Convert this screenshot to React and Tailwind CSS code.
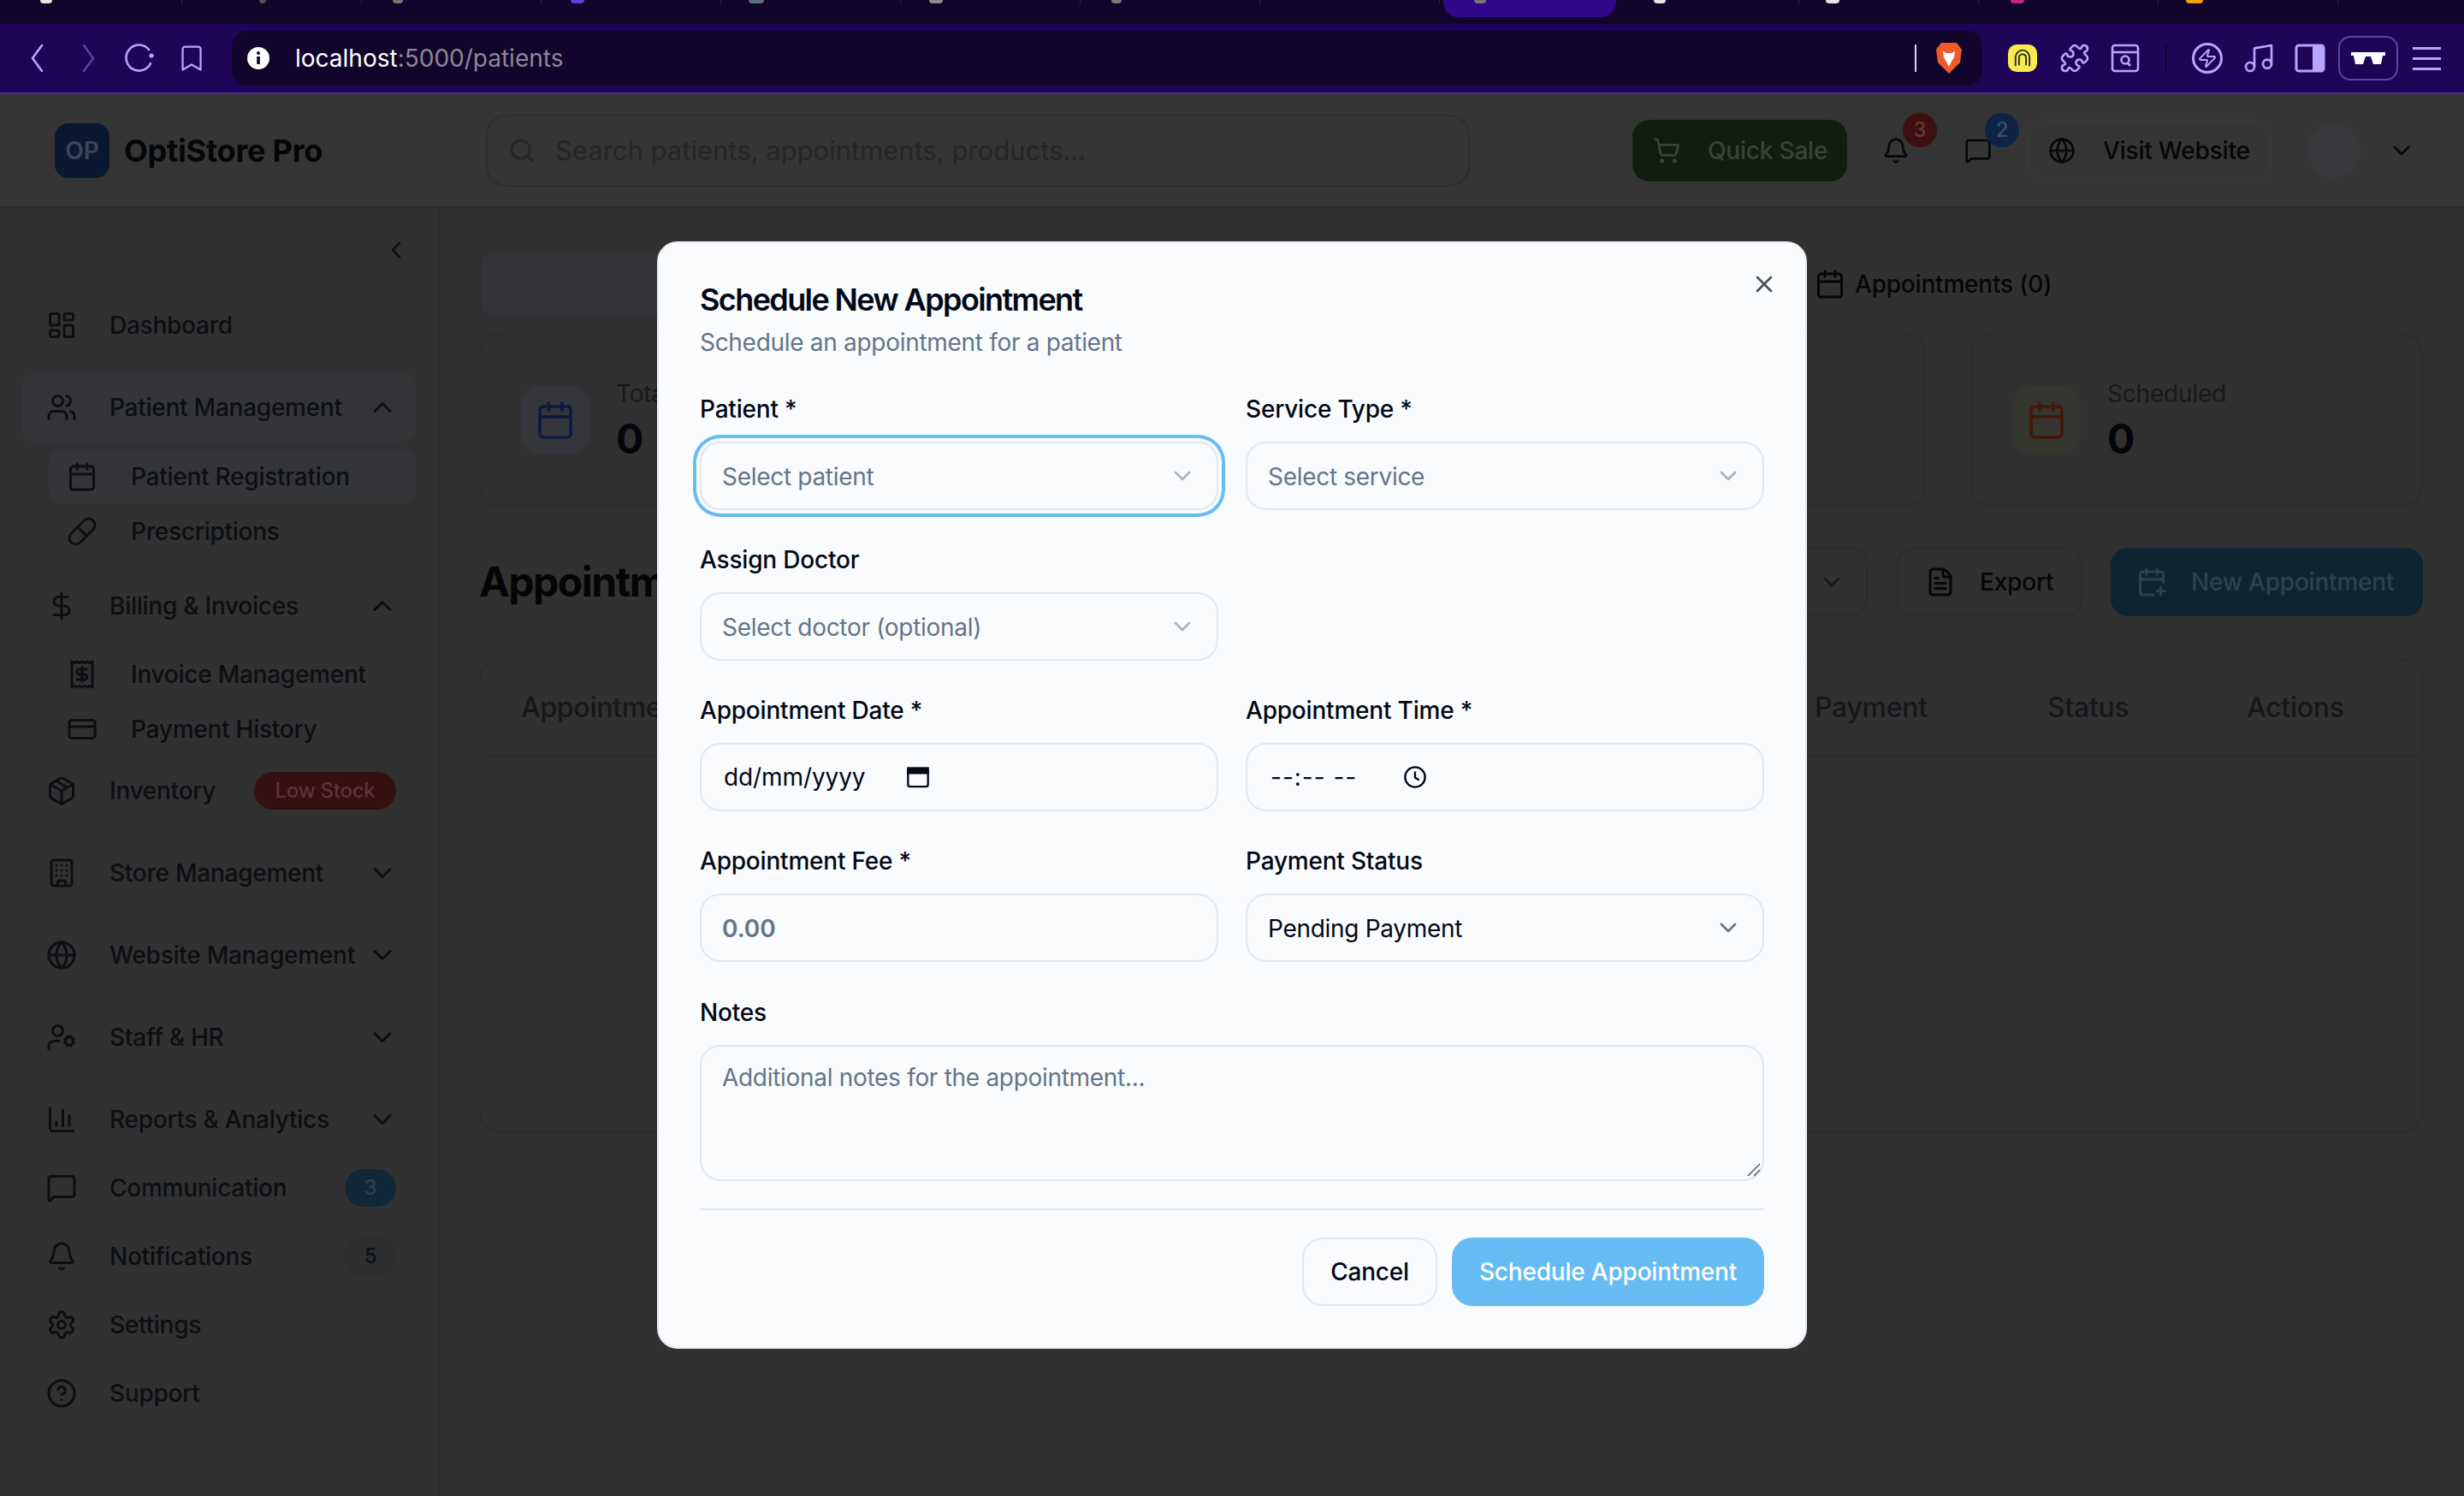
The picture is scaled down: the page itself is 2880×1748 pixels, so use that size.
import {
  Bell, BarChart3, Bookmark, Building, Calendar, CalendarPlus, ChevronDown, ChevronLeft, ChevronUp,
  CircleHelp, CreditCard, DollarSign, FileText, Globe, LayoutDashboard, MessageSquare, Music,
  Package, Pill, Puzzle, Receipt, Search, Settings, ShoppingCart, UserCog, Users, X, Zap,
} from 'lucide-react';

const tabStubs = [
  { w: 'w-[14px]', bg: 'bg-[#e5e5e5]', ml: 'ml-[44px]' },
  { w: 'w-[8px]', bg: 'bg-[#555555]', ml: 'ml-[90px]' },
  { w: 'w-[12px]', bg: 'bg-[#777777]', ml: 'ml-[36px]' },
  { w: 'w-[16px]', bg: 'bg-[#5a3fd0]', ml: 'ml-[34px]' },
  { w: 'w-[18px]', bg: 'bg-[#5c7080]', ml: 'ml-[32px]' },
  { w: 'w-[16px]', bg: 'bg-[#8a8a8a]', ml: 'ml-[33px]' },
  { w: 'w-[12px]', bg: 'bg-[#777777]', ml: 'ml-[36px]' },
  { w: 'w-0', bg: 'bg-transparent', ml: 'ml-[36px]' },
  { w: 'w-[14px]', bg: 'bg-[#777777]', ml: 'ml-[36px]' },
  { w: 'w-[14px]', bg: 'bg-[#e5e5e5]', ml: 'ml-[40px]' },
  { w: 'w-[16px]', bg: 'bg-[#e5e5e5]', ml: 'ml-[31px]' },
  { w: 'w-[16px]', bg: 'bg-[#c0268a]', ml: 'ml-[37px]' },
  { w: 'w-[20px]', bg: 'bg-[#f59e0b]', ml: 'ml-[32px]' },
  { w: 'w-0', bg: 'bg-transparent', ml: 'ml-[36px]' },
];

function TabStrip() {
  return (
    <div className="flex h-[28px] bg-[#11052b] pl-[3px]">
      {tabStubs.map((t, i) =>
        i === 8 ? (
          <div key={i} className="mx-[4px] flex h-[20px] w-[202px] shrink-0 rounded-b-[18px] bg-[#33078a]">
            <div className={`ml-[36px] h-[4px] rounded-b-full ${t.w} ${t.bg}`} />
          </div>
        ) : (
          <div key={i} className="h-[5px] w-[210px] shrink-0 border-r border-[#2f1a66]">
            <div className={`h-[4px] rounded-b-full ${t.w} ${t.bg} ${t.ml}`} />
          </div>
        )
      )}
    </div>
  );
}

function BrowserToolbar() {
  return (
    <div className="flex h-[82px] items-center border-b-2 border-[#4a2a8c] bg-[#1f0558] pl-[23px] text-[#b8a4ff]">
      <svg viewBox="0 0 36 36" className="size-9" fill="none" stroke="currentColor" strokeWidth="2.6" strokeLinecap="round" strokeLinejoin="round">
        <path d="M26 3 L15 18 L26 33" />
      </svg>
      <svg viewBox="0 0 36 36" className="ml-[27px] size-9 text-[#5c3fa0]" fill="none" stroke="currentColor" strokeWidth="2.6" strokeLinecap="round" strokeLinejoin="round">
        <path d="M12 3 L23 18 L12 33" />
      </svg>
      <svg viewBox="0 0 36 36" className="ml-[23px] size-9" fill="none" stroke="currentColor" strokeWidth="2.6" strokeLinecap="round">
        <path d="M29 8 A15 15 0 1 0 31 24" />
        <circle cx="32" cy="15" r="2.6" fill="currentColor" stroke="none" />
      </svg>
      <Bookmark className="ml-[25px] size-9" strokeWidth={1.5} />

      <div className="ml-[29px] flex h-[64px] w-[2046px] items-center rounded-[18px] bg-[#11052b] pl-[17px] pr-[23px]">
        <svg viewBox="0 0 28 28" className="size-7 shrink-0">
          <circle cx="14" cy="14" r="13" fill="#ffffff" />
          <circle cx="14" cy="8" r="2" fill="#11052b" />
          <rect x="12.2" y="12" width="3.6" height="9" fill="#11052b" />
        </svg>
        <span className="ml-[29px] text-[28px] text-white">
          localhost<span className="text-[#8d8797]">:5000/patients</span>
        </span>
        <div className="ml-auto h-[32px] w-[2px] bg-[#d8d4e0]" />
        <svg viewBox="0 0 32 38" className="ml-[22px] h-[38px] w-[32px]">
          <path d="M7 1 H25 L31 9 L29 24 L16 37 L3 24 L1 9 Z" fill="#f0592a" />
          <path d="M9 11 L13 13 H19 L23 11 L22 18 L19 23 L16 29 L13 23 L10 18 Z" fill="#ffffff" />
        </svg>
      </div>

      <div className="ml-[30px] flex h-[32px] w-[34px] items-center justify-center rounded-[10px] bg-[#f8ea4f]">
        <svg viewBox="0 0 24 24" className="size-7" fill="none" stroke="#27272a" strokeWidth="1.6">
          <path d="M5 20 V11 A7 7 0 0 1 19 11 V20" />
          <path d="M8.5 19 V11.5 A3.5 3.5 0 0 1 15.5 11.5 V19" />
        </svg>
      </div>
      <Puzzle className="ml-[26px] size-9" strokeWidth={1.7} />
      <svg viewBox="0 0 36 36" className="ml-[23px] size-9" fill="none" stroke="currentColor" strokeWidth="2.6">
        <rect x="3" y="3" width="30" height="30" rx="3" />
        <path d="M3 11 H33" />
        <circle cx="18" cy="20" r="4.5" />
        <path d="M21 24 L24 27" />
      </svg>
      <div className="ml-[29px] h-[32px] w-[2px] bg-[#0f0330]" />
      <div className="ml-[29px] flex size-9 items-center justify-center rounded-full border-[3px] border-[#b8a4ff]">
        <Zap className="size-6" strokeWidth={2} />
      </div>
      <Music className="ml-[22px] size-10" strokeWidth={1.6} />
      <svg viewBox="0 0 36 36" className="ml-[22px] size-9" fill="none">
        <rect x="2" y="3" width="32" height="30" rx="3" stroke="currentColor" strokeWidth="3" />
        <rect x="21" y="3" width="13" height="30" fill="currentColor" />
      </svg>
      <div className="ml-[15px] flex h-[52px] w-[70px] items-center justify-center rounded-[14px] border-2 border-[#5d43a8]">
        <svg viewBox="0 0 40 16" className="h-[16px] w-[40px]" fill="#ffffff">
          <path d="M0 1 H40 V5 H37 L35 15 H26 L23 6 H17 L14 15 H5 L3 5 H0 Z" />
        </svg>
      </div>
      <div className="ml-[17px] flex w-[33px] flex-col gap-[9px]">
        <div className="h-[3px] bg-[#b8a4ff]" />
        <div className="h-[3px] bg-[#b8a4ff]" />
        <div className="h-[3px] bg-[#b8a4ff]" />
      </div>
    </div>
  );
}

function AppHeader() {
  return (
    <header className="flex h-[133px] shrink-0 items-center border-b-2 border-[#2d2d2d] bg-[#353535] pl-[64px] pr-[57px]">
      <div className="flex w-[504px] items-center gap-[17px]">
        <div className="flex size-16 items-center justify-center rounded-2xl bg-[#0a1832] text-[28px] font-semibold text-[#3b4658]">OP</div>
        <span className="text-[36px] font-bold tracking-[-0.2px] text-[#040608]">OptiStore Pro</span>
      </div>
      <div className="flex h-[84px] w-[1150px] items-center rounded-[24px] border-2 border-[#2d2d2d] pl-[24px]">
        <Search className="size-8 text-[#252628]" />
        <span className="ml-[23px] pt-[2px] text-[31px] text-[#252628]">Search patients, appointments, products...</span>
      </div>
      <div className="ml-auto flex items-center tracking-[-0.2px]">
        <div className="flex h-[72px] w-[251px] items-center rounded-[20px] bg-[#0f1e0f] pl-[24px] text-[28px] font-medium text-[#38433a]">
          <ShoppingCart className="size-8" />
          <span className="ml-[32px]">Quick Sale</span>
        </div>
        <div className="relative ml-[21px] flex size-[72px] items-center justify-center text-[#040608]">
          <Bell className="size-8" />
          <span className="absolute left-[44px] top-[-8px] flex size-[40px] items-center justify-center rounded-full bg-[#3d0f0f] text-[24px] font-medium text-[#633838]">3</span>
        </div>
        <div className="relative ml-[24px] flex size-[72px] items-center justify-center text-[#040608]">
          <MessageSquare className="size-8" />
          <span className="absolute left-[44px] top-[-8px] flex size-[40px] items-center justify-center rounded-full bg-[#0f2347] text-[24px] font-medium text-[#384f76]">2</span>
        </div>
        <div className="ml-[21px] flex h-[72px] w-[286px] items-center rounded-[20px] border-2 border-[#383838] pl-[23px] text-[28px] font-medium text-[#040608]">
          <Globe className="size-8" />
          <span className="ml-[32px]">Visit Website</span>
        </div>
        <div className="ml-[42px] h-[64px] w-[62px] rounded-full bg-[#36383b]" />
        <ChevronDown className="ml-[32px] size-8 text-[#040608]" />
      </div>
    </header>
  );
}

function Badge({ className, children }) {
  return (
    <span className={`ml-auto mr-[2px] flex h-[44px] items-center justify-center rounded-full text-[24px] font-medium ${className}`}>
      {children}
    </span>
  );
}

function NavRow({ icon: Icon, label, open, group, active, badge, mb }) {
  return (
    <div className={`flex h-[80px] items-center rounded-[16px] pl-[29px] pr-[21px] ${active ? 'bg-[#343538]' : ''} ${mb ? 'mb-[16px]' : ''}`}>
      <Icon className="size-9 shrink-0" strokeWidth={2} />
      <span className="ml-[38px] whitespace-nowrap">{label}</span>
      {group && (open ? <ChevronUp className="ml-auto size-9" /> : <ChevronDown className="ml-auto size-9" />)}
      {badge}
    </div>
  );
}

function SubRow({ icon: Icon, label, active }) {
  return (
    <div className={`ml-[32px] flex h-[64px] items-center rounded-[16px] pl-[21px] ${active ? 'bg-[#343538]' : ''}`}>
      <Icon className="size-9 shrink-0" strokeWidth={2} />
      <span className="ml-[39px] whitespace-nowrap">{label}</span>
    </div>
  );
}

function Sidebar() {
  return (
    <aside className="w-[514px] shrink-0 border-r-2 border-[#2d2d2d] bg-[#313131] pl-[25px] pr-[26px] text-[28px] font-medium tracking-[-0.25px] text-[#0c0e13]">
      <div className="flex h-[97px] items-center justify-end pr-[7px]">
        <ChevronLeft className="size-8" />
      </div>
      <NavRow icon={LayoutDashboard} label="Dashboard" mb />
      <NavRow icon={Users} label="Patient Management" group open active />
      <div className="mb-[15px] mt-[9px]">
        <SubRow icon={Calendar} label="Patient Registration" active />
        <SubRow icon={Pill} label="Prescriptions" />
      </div>
      <NavRow icon={DollarSign} label="Billing & Invoices" group open />
      <div className="mt-[8px]">
        <SubRow icon={Receipt} label="Invoice Management" />
        <SubRow icon={CreditCard} label="Payment History" />
      </div>
      <NavRow
        icon={Package}
        label="Inventory"
        mb
        badge={<Badge className="w-[166px] bg-[#341010] text-[#5e3434]">Low Stock</Badge>}
      />
      <NavRow icon={Building} label="Store Management" group mb />
      <NavRow icon={Globe} label="Website Management" group mb />
      <NavRow icon={UserCog} label="Staff & HR" group mb />
      <NavRow icon={BarChart3} label="Reports & Analytics" group />
      <NavRow
        icon={MessageSquare}
        label="Communication"
        badge={<Badge className="w-[60px] bg-[#102838] text-[#2a4250]">3</Badge>}
      />
      <NavRow
        icon={Bell}
        label="Notifications"
        badge={<Badge className="w-[60px] bg-[#2d2e30] text-[#0c0e13]">5</Badge>}
      />
      <NavRow icon={Settings} label="Settings" />
      <NavRow icon={CircleHelp} label="Support" />
    </aside>
  );
}

function StatCard({ label, tile, stroke }) {
  return (
    <div className="flex h-[203px] items-center rounded-[24px] border-2 border-[#2d2d2d] pl-[47px]">
      <div className={`flex size-20 items-center justify-center rounded-[24px] ${tile}`}>
        <Calendar className={`size-12 ${stroke}`} strokeWidth={1.8} />
      </div>
      <div className="ml-[31px]">
        <p className="text-[28px] leading-[40px] tracking-[-0.2px] text-[#16181c]">{label}</p>
        <p className="mt-[5px] text-[48px] font-bold leading-[56px] text-[#04060b]">0</p>
      </div>
    </div>
  );
}

function MainContent() {
  return (
    <main className="min-w-0 flex-1 bg-[#313131] pl-[46px] pr-[48px] pt-[49px]">
      <div className="grid h-[80px] grid-cols-2 rounded-[16px] border-2 border-[#2f2f2f] text-[28px] font-medium tracking-[-0.2px] text-[#040608]">
        <div className="rounded-[14px] bg-[#333438]" />
        <div className="flex items-center pl-[425px]">
          <Calendar className="size-9" />
          <span className="ml-[11px]">Appointments (0)</span>
        </div>
      </div>

      <div className="mt-[17px] grid grid-cols-4 gap-[52px]">
        <StatCard label="Total" tile="bg-[#34363b]" stroke="text-[#0d1a3d]" />
        <div className="h-[203px] rounded-[24px] border-2 border-[#2d2d2d]" />
        <div className="h-[203px] rounded-[24px] border-2 border-[#2d2d2d]" />
        <StatCard label="Scheduled" tile="bg-[#363631]" stroke="text-[#421807]" />
      </div>

      <div className="mt-[48px] flex h-[80px] items-center text-[28px] font-medium tracking-[-0.2px]">
        <h1 className="text-[48px] font-bold tracking-[-1.5px] text-[#050505]">Appointments</h1>
        <div className="ml-auto flex h-[80px] w-[284px] items-center justify-end rounded-[20px] border-2 border-[#2d2d2d] pr-[24px] text-[#17181a]">
          <ChevronDown className="size-8" />
        </div>
        <div className="ml-[34px] flex h-[80px] w-[217px] items-center rounded-[20px] border-2 border-[#2d2d2d] pl-[31px] text-[#040608]">
          <FileText className="size-9" />
          <span className="ml-[28px]">Export</span>
        </div>
        <div className="ml-[33px] flex h-[80px] w-[365px] items-center rounded-[20px] bg-[#0f2431] pl-[30px] text-[#2a4250]">
          <CalendarPlus className="size-9" />
          <span className="ml-[28px]">New Appointment</span>
        </div>
      </div>

      <div className="mt-[49px] h-[555px] rounded-[24px] border-2 border-[#2d2d2d]">
        <div className="grid h-[114px] grid-cols-[1512px_272px_233px_1fr] items-center border-b-2 border-[#2d2d2d] pl-[47px] text-[32px] font-medium tracking-[-0.3px] text-[#15171b]">
          <span>Appointment</span>
          <span>Payment</span>
          <span>Status</span>
          <span>Actions</span>
        </div>
      </div>
    </main>
  );
}

function Field({ label, children }) {
  return (
    <div>
      <label className="block text-[28px] font-medium leading-[28px] tracking-[-0.2px] text-[#020817]">{label}</label>
      <div className="mt-[24px]">{children}</div>
    </div>
  );
}

function SelectBox({ text, value, focused }) {
  return (
    <div
      className={`flex h-[80px] items-center justify-between rounded-[24px] border-2 border-[#e2e8f0] pl-[24px] pr-[24px] text-[28px] tracking-[-0.3px] ${
        value ? 'text-[#020817]' : 'text-[#64748b]'
      } ${focused ? 'ring-4 ring-[#67bcf3] ring-offset-4 ring-offset-[#f9fbfd]' : ''}`}
    >
      <span className="pt-[1px]">{text}</span>
      <ChevronDown className={`size-8 ${value ? 'text-[#64748b]' : 'text-[#a9b4c3]'}`} />
    </div>
  );
}

function ScheduleModal() {
  return (
    <div className="absolute inset-0 flex items-center justify-center">
      <div className="relative w-[1344px] rounded-[24px] border-2 border-[#e9edf3] bg-[#f9fbfd] p-[48px]">
        <X className="absolute right-[32px] top-[32px] size-8 text-[#475060]" />
        <h2 className="text-[36px] font-semibold leading-[36px] tracking-[-1.6px] text-[#020817]">Schedule New Appointment</h2>
        <p className="mt-[12px] text-[28px] leading-[40px] tracking-[-0.3px] text-[#64748b]">Schedule an appointment for a patient</p>

        <div className="mt-[44px] grid grid-cols-2 gap-x-[32px] gap-y-[44px]">
          <Field label="Patient *"><SelectBox text="Select patient" focused /></Field>
          <Field label="Service Type *"><SelectBox text="Select service" /></Field>
          <Field label="Assign Doctor"><SelectBox text="Select doctor (optional)" /></Field>
          <div />
          <Field label="Appointment Date *">
            <div className="flex h-[80px] items-center rounded-[24px] border-2 border-[#e2e8f0] pl-[26px] text-[28px] text-[#020817]">
              <span className="w-[213px] tracking-[-0.1px]">dd/mm/yyyy</span>
              <svg viewBox="0 0 24 24" className="size-7" fill="none" stroke="#020817" strokeWidth="2">
                <rect x="2" y="3.5" width="20" height="18" rx="2" />
                <rect x="2" y="3" width="20" height="5" fill="#020817" />
              </svg>
            </div>
          </Field>
          <Field label="Appointment Time *">
            <div className="flex h-[80px] items-center rounded-[24px] border-2 border-[#e2e8f0] pl-[27px] text-[28px] text-[#020817]">
              <span className="w-[155px] whitespace-pre tracking-[1px]">--:-- --</span>
              <svg viewBox="0 0 24 24" className="size-7" fill="none" stroke="#020817" strokeWidth="2">
                <circle cx="12" cy="12" r="10" />
                <path d="M12 6.5 V12.5 L16 15" />
              </svg>
            </div>
          </Field>
          <Field label="Appointment Fee *">
            <input
              readOnly
              placeholder="0.00"
              className="h-[80px] w-full rounded-[24px] border-2 border-[#e2e8f0] bg-transparent px-[24px] pt-[2px] text-[28px] font-semibold outline-none placeholder:text-[#64748b]"
            />
          </Field>
          <Field label="Payment Status"><SelectBox text="Pending Payment" value /></Field>
        </div>

        <div className="mt-[45px]">
          <Field label="Notes">
            <div className="relative">
              <textarea
                readOnly
                placeholder="Additional notes for the appointment..."
                className="block h-[159px] w-full resize-none rounded-[24px] border-2 border-[#e2e8f0] bg-transparent px-[24px] py-[16px] text-[28px] leading-[40px] tracking-[-0.3px] outline-none placeholder:text-[#64748b]"
              />
              <svg viewBox="0 0 16 16" className="absolute bottom-[5px] right-[4px] size-4" fill="none" stroke="#475569" strokeWidth="1.4">
                <path d="M15 1 L1 15" />
                <path d="M15 8 L8 15" />
              </svg>
            </div>
          </Field>
        </div>

        <div className="mt-[32px] flex justify-end gap-[17px] border-t-2 border-[#e2e8f0] pt-[32px] text-[28px] font-medium tracking-[-0.2px]">
          <button className="h-[80px] w-[158px] rounded-[24px] border-2 border-[#e2e8f0] text-[#020817]">Cancel</button>
          <button className="h-[80px] w-[365px] rounded-[24px] bg-[#66bbf2] text-white">Schedule Appointment</button>
        </div>
      </div>
    </div>
  );
}

export default function App() {
  return (
    <div className="flex h-screen flex-col overflow-hidden bg-[#313131] font-['Inter',sans-serif]">
      <TabStrip />
      <BrowserToolbar />
      <div className="relative flex min-h-0 flex-1 flex-col">
        <AppHeader />
        <div className="flex min-h-0 flex-1">
          <Sidebar />
          <MainContent />
        </div>
        <ScheduleModal />
      </div>
    </div>
  );
}
